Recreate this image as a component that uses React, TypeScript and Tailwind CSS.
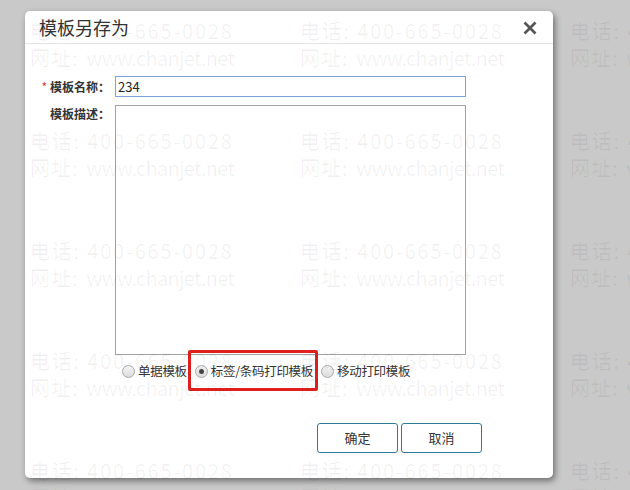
import React from "react";

const cjk = { fontFamily: '"Microsoft YaHei", "Noto Sans CJK SC", "Liberation Sans", sans-serif' };
const mark = { fontFamily: '"Noto Sans CJK SC", sans-serif' };

function Watermark() {
    const rows = [0, 1, 2, 3, 4];
    const cols = [0, 1, 2];
    return (
        <div className="pointer-events-none absolute inset-0 overflow-hidden" style={mark}>
            {rows.map(r =>
                cols.map(c => (
                    <div
                        key={`${r}-${c}`}
                        className="absolute whitespace-nowrap text-[20px] leading-[27px] text-black/[0.06]"
                        style={{ left: 30 + c * 270, top: 17 + r * 110 }}
                    >
                        <div className="tracking-[1.8px]">电话: 400-665-0028</div>
                        <div className="tracking-[-0.7px]">
                            <span className="mr-[4px] tracking-[1px]">网址:</span> www.chanjet.net
                        </div>
                    </div>
                ))
            )}
        </div>
    );
}

function Radio({ label, checked }: { label: string; checked?: boolean }) {
    return (
        <label className="flex items-center gap-[3px] text-[12.5px] tracking-[-0.3px] text-[#333]">
            <span className="flex h-[13px] w-[13px] items-center justify-center rounded-full border border-[#a8a8a8] bg-gradient-to-b from-[#f4f4f4] to-[#dcdcdc]">
                {checked && <span className="h-[5px] w-[5px] rounded-full bg-[#444]" />}
            </span>
            {label}
        </label>
    );
}

export default function App() {
    return (
        <div className="relative h-[490px] w-[630px] overflow-hidden bg-[#c9c9c9]" style={cjk}>
            <div className="ml-[25px] mt-[11px] flex h-[467px] w-[528px] flex-col rounded-[5px] bg-white shadow-[2px_3px_6px_rgba(0,0,0,0.45)]">
                {/* Title */}
                <div className="flex h-[33px] items-center justify-between border-b border-[#e3e3e3] pl-[14px] pr-[16px]">
                    <span className="text-[18px] text-[#333]">模板另存为</span>
                    <svg width="14" height="14" viewBox="0 0 14 14" className="mt-[1px]">
                        <path d="M1.5 1.5 L12.5 12.5 M12.5 1.5 L1.5 12.5" stroke="#555" strokeWidth="2.6" />
                    </svg>
                </div>

                {/* Form */}
                <div className="flex flex-col gap-[8px] pl-[15px] pt-[32px]">
                    <div className="flex items-center">
                        <div className="w-[75px] pr-[5px] text-right text-[12px] font-bold text-[#333]">
                            <span className="mr-[3px] font-normal text-[#e33]">*</span>模板名称：
                        </div>
                        <input
                            defaultValue="234"
                            className="h-[21px] w-[351px] border border-[#7ea2d8] px-[2px] text-[13px] text-[#222] outline-none"
                        />
                    </div>
                    <div className="flex items-start">
                        <div className="w-[75px] pr-[5px] text-right text-[12px] font-bold text-[#333]">模板描述：</div>
                        <textarea className="h-[250px] w-[351px] resize-none border border-[#a3a3a3] outline-none" />
                    </div>
                </div>

                {/* Radios */}
                <div className="flex h-[32px] items-center gap-[8px] pl-[97px] pt-[1px]">
                    <Radio label="单据模板" />
                    <Radio label="标签/条码打印模板" checked />
                    <Radio label="移动打印模板" />
                </div>

                {/* Buttons */}
                <div className="flex gap-[3px] pl-[292px] pt-[36px]">
                    <button className="h-[30px] w-[81px] rounded-[3px] border border-[#2e7b98] text-[13px] text-[#333]">确定</button>
                    <button className="h-[30px] w-[81px] rounded-[3px] border border-[#2e7b98] text-[13px] text-[#333]">取消</button>
                </div>
            </div>

            {/* red annotation box */}
            <div className="pointer-events-none absolute left-[188px] top-[350px] h-[41px] w-[130px] rounded-[2px] border-[3px] border-[#e0201e]" />

            <Watermark />
        </div>
    );
}
